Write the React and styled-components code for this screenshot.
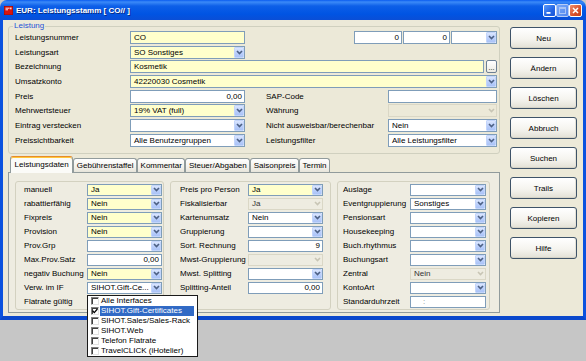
import React from "react";
import styled, { createGlobalStyle, css } from "styled-components";

const GlobalStyle = createGlobalStyle`
  html, body { margin: 0; padding: 0; background: #c6c6c6; }
  body { font-family: "Liberation Sans", Arial, sans-serif; font-size: 8px; color: #000; }
  * { box-sizing: border-box; }
`;

const toneBg = {
  yellow: "#ffffcc",
  white: "#ffffff",
  disabled: "transparent",
};

const Page = styled.div`
  position: relative;
  width: 586px;
  height: 361px;
  overflow: hidden;
  background: #c6c6c6;
`;

const Window = styled.div`
  width: 586px;
  height: 320px;
  display: flex;
  flex-direction: column;
`;

const TitleBar = styled.div`
  height: 20px;
  flex: none;
  display: flex;
  align-items: center;
  padding: 0 4px;
  border-radius: 7px 7px 0 0;
  background: linear-gradient(#0a5cf0 0%, #3b8af8 10%, #0d5fe8 30%, #0054e3 70%, #0a4ed6 100%);
`;

const Title = styled.span`
  margin-left: 3px;
  color: #fff;
  font-weight: bold;
  font-size: 8px;
  text-shadow: 1px 1px 0 #0a2a80;
  white-space: nowrap;
`;

const TitleButtons = styled.div`
  margin-left: auto;
  display: flex;
`;

const CaptionButton = styled.div`
  width: 13px;
  height: 13px;
  border: 1px solid ${(p) => (p.$kind === "max" ? "#b8cdf6" : "#ffffff")};
  border-radius: 2px;
  display: flex;
  align-items: center;
  justify-content: center;
  background: ${(p) =>
    p.$kind === "close"
      ? "linear-gradient(135deg, #f09070, #d8502a 60%, #c2421c)"
      : p.$kind === "max"
      ? "linear-gradient(135deg, #7aa8f8, #4f86ef)"
      : "linear-gradient(135deg, #5b9bfb, #2264e4 60%, #1a56d8)"};
`;

const Frame = styled.div`
  flex: 1;
  display: flex;
  gap: 10px;
  padding: 0 3px 0 5px;
  background: #ece9d8;
  border-left: 3px solid #0b52df;
  border-right: 3px solid #0b52df;
  border-bottom: 4px solid #0a48cc;
`;

const MainColumn = styled.div`
  width: 492px;
  display: flex;
  flex-direction: column;
`;

const GroupBox = styled.fieldset`
  margin: 1px 0 0;
  padding: 0 2px 6px 6px;
  border: 1px solid #d0d0bf;
  border-radius: 3px;
  min-width: 0;
`;

const GroupTitle = styled.legend`
  font-size: 8px;
  line-height: 10px;
  padding: 0 1px;
  margin-left: -2px;
  color: #1d52d6;
`;

const FormGrid = styled.div`
  display: grid;
  grid-template-columns: 115px 115px 21px 122px 109px;
  grid-auto-rows: 13px;
  row-gap: 1.7px;
  align-items: center;
`;

const Label = styled.span`
  grid-column: ${(p) => p.$col || "auto"};
  white-space: nowrap;
  font-size: 8px;
  color: #000;
`;

const fieldBase = css`
  grid-column: ${(p) => p.$col || "auto"};
  height: 100%;
  min-width: 0;
  display: flex;
  align-items: center;
  border: 1px solid ${(p) => (p.$tone === "disabled" ? "#dad7c6" : "#7f9db9")};
  background: ${(p) => toneBg[p.$tone || "white"]};
  color: ${(p) => (p.$tone === "disabled" ? "#333" : "#000")};
  font-size: 8px;
  white-space: nowrap;
  overflow: hidden;
`;

const TextBox = styled.div`
  ${fieldBase};
  flex: ${(p) => (p.$grow ? 1 : "none")};
  width: ${(p) => (p.$w ? `${p.$w}px` : "auto")};
  justify-content: ${(p) => (p.$align === "right" ? "flex-end" : "flex-start")};
  padding: 0 2px 0 3px;
  color: ${(p) => (p.$muted ? "#8a8a8a" : "#000")};
`;

const ComboBox = styled.div`
  ${fieldBase};
  width: ${(p) => (p.$w ? `${p.$w}px` : "auto")};
  flex: none;
`;

const FieldText = styled.span`
  flex: 1;
  padding-left: 3px;
  overflow: hidden;
  white-space: nowrap;
`;

const ComboButton = styled.span`
  flex: none;
  width: 10px;
  height: 100%;
  display: flex;
  align-items: center;
  justify-content: center;
  border-radius: 1px;
  ${(p) =>
    p.$disabled
      ? css`
          background: transparent;
        `
      : css`
          background: linear-gradient(#dbe6fe, #bcd0fb 50%, #aac3f7);
          border: 1px solid #c3d5fb;
        `}
`;

const SpanCell = styled.div`
  grid-column: ${(p) => p.$col};
  height: 100%;
  display: flex;
  justify-content: ${(p) => p.$justify || "flex-start"};
  gap: ${(p) => p.$gap || 0}px;
  min-width: 0;
`;

const SmallButton = styled.div`
  flex: none;
  width: 11px;
  height: 100%;
  border: 1px solid #6c7f94;
  border-radius: 2px;
  background: linear-gradient(#ffffff, #ecebe4);
  font-size: 7px;
  display: flex;
  align-items: flex-end;
  justify-content: center;
  line-height: 9px;
  color: #000;
`;

const TabStrip = styled.div`
  margin-top: 2px;
  height: 16px;
  display: flex;
  align-items: flex-end;
  padding-left: 2px;
`;

const Tab = styled.div`
  position: relative;
  font-size: 8px;
  white-space: nowrap;
  display: flex;
  align-items: center;
  border: 1px solid #919b9c;
  border-bottom: none;
  border-radius: 3px 3px 0 0;
  ${(p) =>
    p.$active
      ? css`
          height: 17px;
          margin-bottom: -1px;
          z-index: 2;
          padding: 0 3.5px 1px;
          background: #fbfbf8;
          border-top: 1px solid #e68b2c;
          box-shadow: inset 0 1px 0 #ffc83c;
        `
      : css`
          height: 14px;
          padding: 0 2.5px;
          background: linear-gradient(#ffffff, #f1efe8 70%, #e6e4da);
        `}
`;

const TabPanel = styled.div`
  position: relative;
  z-index: 1;
  height: 141px;
  border: 1px solid #919b9c;
  background: #eeece1;
  display: flex;
  gap: 6px;
  padding: 8px 9px 2px 6px;
`;

const SubBox = styled.div`
  width: ${(p) => p.$w}px;
  flex: none;
  border: 1px solid #d3d1c0;
  border-radius: 3px;
  padding: 2px ${(p) => p.$pr}px 0 ${(p) => p.$pl}px;
  display: grid;
  grid-template-columns: ${(p) => `${p.$lw}px ${p.$iw}px`};
  grid-auto-rows: 12px;
  row-gap: 2px;
  align-items: center;
  align-content: start;
`;

const ButtonColumn = styled.div`
  padding-top: 7px;
  display: flex;
  flex-direction: column;
  gap: 8px;
`;

const ActionButton = styled.button`
  width: 67px;
  height: 22px;
  padding: 0;
  font-family: "Liberation Sans", Arial, sans-serif;
  font-size: 8px;
  color: #000;
  border: 1px solid #3e5368;
  border-radius: 3px;
  background: linear-gradient(#ffffff, #f5f4ef 55%, #e2e0d5);
  box-shadow: inset 0 -1px 0 #d6d3c6, inset -1px 0 0 #e4e2d8;
`;

const Dropdown = styled.div`
  position: absolute;
  z-index: 10;
  left: 87px;
  top: 295px;
  width: 111px;
  height: 62px;
  background: #fff;
  border: 1px solid #1a1a1a;
  display: flex;
  flex-direction: column;
`;

const ListItem = styled.div`
  height: 10px;
  display: flex;
  align-items: center;
  padding-left: 3px;
  gap: 1px;
`;

const CheckBox = styled.span`
  width: 8px;
  height: 8px;
  flex: none;
  background: #fff;
  border: 1px solid;
  border-color: #808080 #e2e2e2 #e2e2e2 #808080;
  box-shadow: inset 1px 1px 0 #404040;
  display: flex;
  align-items: center;
  justify-content: center;
`;

const ItemText = styled.span`
  font-size: 8px;
  line-height: 10px;
  padding: 0 1px;
  white-space: nowrap;
  background: ${(p) => (p.$selected ? "#316ac5" : "transparent")};
  color: ${(p) => (p.$selected ? "#fff" : "#000")};
  ${(p) => p.$selected && css`width: 94px;`}
`;

function Chevron({ disabled }) {
  return (
    <svg width="7" height="5" viewBox="0 0 7 5">
      <path d="M1 1 L3.5 3.6 L6 1" fill="none" stroke={disabled ? "#c8c5b5" : "#4d6185"} strokeWidth="1.6" />
    </svg>
  );
}

function Combo({ tone = "white", value = "", col, w }) {
  const disabled = tone === "disabled";
  return (
    <ComboBox $tone={tone} $col={col} $w={w}>
      <FieldText>{value}</FieldText>
      <ComboButton $disabled={disabled}>
        <Chevron disabled={disabled} />
      </ComboButton>
    </ComboBox>
  );
}

function Field({ f }) {
  if (f.type === "combo") return <Combo tone={f.tone} value={f.value} />;
  if (f.type === "text")
    return (
      <TextBox $tone={f.tone || "white"} $align={f.align} $muted={f.muted}>
        {f.value}
      </TextBox>
    );
  return <span />;
}

const leftRows = [
  ["manuell", { type: "combo", tone: "yellow", value: "Ja" }],
  ["rabattierfähig", { type: "combo", tone: "yellow", value: "Nein" }],
  ["Fixpreis", { type: "combo", tone: "yellow", value: "Nein" }],
  ["Provision", { type: "combo", tone: "yellow", value: "Nein" }],
  ["Prov.Grp", { type: "combo", value: "" }],
  ["Max.Prov.Satz", { type: "text", value: "0,00", align: "right" }],
  ["negativ Buchung", { type: "combo", tone: "yellow", value: "Nein" }],
  ["Verw. im IF", { type: "combo", value: "SIHOT.Gift-Ce..." }],
  ["Flatrate gültig", { type: "none" }],
];

const midRows = [
  ["Preis pro Person", { type: "combo", tone: "yellow", value: "Ja" }],
  ["Fiskalisierbar", { type: "combo", tone: "disabled", value: "Ja" }],
  ["Kartenumsatz", { type: "combo", value: "Nein" }],
  ["Gruppierung", { type: "combo", value: "" }],
  ["Sort. Rechnung", { type: "text", value: "9", align: "right" }],
  ["Mwst-Gruppierung", { type: "combo", tone: "disabled", value: "" }],
  ["Mwst. Splitting", { type: "combo", value: "" }],
  ["Splitting-Anteil", { type: "text", value: "0,00", align: "right" }],
];

const rightRows = [
  ["Auslage", { type: "combo", value: "" }],
  ["Eventgruppierung", { type: "combo", value: "Sonstiges" }],
  ["Pensionsart", { type: "combo", value: "" }],
  ["Housekeeping", { type: "combo", value: "" }],
  ["Buch.rhythmus", { type: "combo", value: "" }],
  ["Buchungsart", { type: "combo", value: "" }],
  ["Zentral", { type: "combo", tone: "disabled", value: "Nein" }],
  ["KontoArt", { type: "combo", value: "" }],
  ["Standarduhrzeit", { type: "text", value: "\u00a0\u00a0\u00a0\u00a0:", muted: true }],
];

const boxes = [
  { w: 149, pl: 8, pr: 1, lw: 63, iw: 75, rows: leftRows },
  { w: 161, pl: 9, pr: 6, lw: 68, iw: 75, rows: midRows },
  { w: 153, pl: 5, pr: 3, lw: 67, iw: 76, rows: rightRows },
];

const tabs = ["Leistungsdaten", "Gebührenstaffel", "Kommentar", "Steuer/Abgaben", "Saisonpreis", "Termin"];
const actions = ["Neu", "Ändern", "Löschen", "Abbruch", "Suchen", "Trails", "Kopieren", "Hilfe"];
const listItems = [
  { label: "Alle Interfaces", checked: false },
  { label: "SIHOT.Gift-Certificates", checked: true, selected: true },
  { label: "SIHOT.Sales/Sales-Rack", checked: false },
  { label: "SIHOT.Web", checked: false },
  { label: "Telefon Flatrate", checked: false },
  { label: "TravelCLICK (iHotelier)", checked: false },
];

function AppIcon() {
  return (
    <svg width="9" height="9" viewBox="0 0 9 9">
      <rect x="0" y="0" width="9" height="9" fill="#d8140f" />
      <rect x="0" y="0" width="9" height="9" fill="none" stroke="#8a0a06" strokeWidth="0.8" />
      <path d="M1.5 2.2 H5.5 M1.5 3.8 H4" stroke="#fff" strokeWidth="0.9" />
      <rect x="5.8" y="1.5" width="1.8" height="1.8" fill="#ffd0c0" />
    </svg>
  );
}

export default function App() {
  return (
    <Page>
      <GlobalStyle />
      <Window>
        <TitleBar>
          <AppIcon />
          <Title>EUR: Leistungsstamm [ CO// ]</Title>
          <TitleButtons>
            <CaptionButton $kind="min">
              <svg width="9" height="9" viewBox="0 0 9 9">
                <rect x="1.5" y="6" width="4" height="1.8" fill="#fff" />
              </svg>
            </CaptionButton>
            <CaptionButton $kind="max">
              <svg width="9" height="9" viewBox="0 0 9 9">
                <rect x="1.5" y="1.5" width="6" height="6" fill="none" stroke="#a9c4f6" strokeWidth="1" />
                <rect x="1.5" y="1.5" width="6" height="1.5" fill="#a9c4f6" />
              </svg>
            </CaptionButton>
            <CaptionButton $kind="close">
              <svg width="9" height="9" viewBox="0 0 9 9">
                <path d="M2 2 L7 7 M7 2 L2 7" stroke="#fff" strokeWidth="1.5" />
              </svg>
            </CaptionButton>
          </TitleButtons>
        </TitleBar>
        <Frame>
          <MainColumn>
            <GroupBox>
              <GroupTitle>Leistung</GroupTitle>
              <FormGrid>
                <Label>Leistungsnummer</Label>
                <TextBox $tone="yellow">CO</TextBox>
                <SpanCell $col="4 / 6" $justify="flex-end" $gap={1}>
                  <TextBox $tone="white" $align="right" $w={48}>0</TextBox>
                  <TextBox $tone="white" $align="right" $w={47}>0</TextBox>
                  <Combo w={46} />
                </SpanCell>

                <Label>Leistungsart</Label>
                <Combo tone="yellow" value="SO Sonstiges" />
                <span />
                <span />
                <span />

                <Label>Bezeichnung</Label>
                <SpanCell $col="2 / 6" $gap={2}>
                  <TextBox $tone="yellow" $grow>Kosmetik</TextBox>
                  <SmallButton>...</SmallButton>
                </SpanCell>

                <Label>Umsatzkonto</Label>
                <Combo tone="yellow" value="42220030 Cosmetik" col="2 / 6" />

                <Label>Preis</Label>
                <TextBox $tone="white" $align="right">0,00</TextBox>
                <Label $col="4">SAP-Code</Label>
                <TextBox $tone="white" />

                <Label>Mehrwertsteuer</Label>
                <Combo tone="yellow" value="19% VAT (full)" />
                <Label $col="4">Währung</Label>
                <Combo tone="disabled" />

                <Label>Eintrag verstecken</Label>
                <Combo />
                <Label $col="4">Nicht ausweisbar/berechenbar</Label>
                <Combo value="Nein" />

                <Label>Preissichtbarkeit</Label>
                <Combo value="Alle Benutzergruppen" />
                <Label $col="4">Leistungsfilter</Label>
                <Combo value="Alle Leistungsfilter" />
              </FormGrid>
            </GroupBox>

            <TabStrip>
              {tabs.map((t, i) => (
                <Tab key={t} $active={i === 0}>
                  {t}
                </Tab>
              ))}
            </TabStrip>
            <TabPanel>
              {boxes.map((b, i) => (
                <SubBox key={i} $w={b.w} $pl={b.pl} $pr={b.pr} $lw={b.lw} $iw={b.iw}>
                  {b.rows.map(([label, f]) => (
                    <React.Fragment key={label}>
                      <Label>{label}</Label>
                      <Field f={f} />
                    </React.Fragment>
                  ))}
                </SubBox>
              ))}
            </TabPanel>
          </MainColumn>
          <ButtonColumn>
            {actions.map((a) => (
              <ActionButton key={a}>{a}</ActionButton>
            ))}
          </ButtonColumn>
        </Frame>
      </Window>
      <Dropdown>
        {listItems.map((it) => (
          <ListItem key={it.label}>
            <CheckBox>
              {it.checked && (
                <svg width="6" height="6" viewBox="0 0 6 6">
                  <path d="M0.6 2.8 L2.3 4.6 L5.4 1" fill="none" stroke="#000" strokeWidth="1.3" />
                </svg>
              )}
            </CheckBox>
            <ItemText $selected={it.selected}>{it.label}</ItemText>
          </ListItem>
        ))}
      </Dropdown>
    </Page>
  );
}
